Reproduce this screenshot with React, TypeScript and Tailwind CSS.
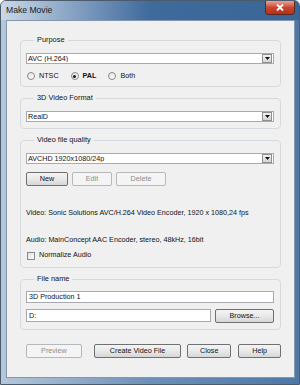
import type { ReactNode } from 'react'

const font = { fontFamily: '"Liberation Sans", Arial, sans-serif' }

function Combo({ value }: { value: string }) {
  return (
    <div className="flex h-[11px] items-center border border-[#a7abb0] bg-white pl-[1px]">
      <span className="flex-1 truncate leading-none text-[#111]">{value}</span>
      <span className="mr-[1px] flex h-[9px] w-[10px] items-center justify-center border border-[#8e8f8f] bg-gradient-to-b from-[#f2f2f2] to-[#d4d4d4]">
        <svg width="5" height="3" viewBox="0 0 5 3">
          <path d="M0 0h5L2.5 3z" fill="#111" />
        </svg>
      </span>
    </div>
  )
}

function Btn({
  children,
  disabled,
  className = ''
}: {
  children: ReactNode
  disabled?: boolean
  className?: string
}) {
  return (
    <button
      type="button"
      className={`flex h-[14px] items-center justify-center rounded-[2px] border leading-none ${
        disabled
          ? 'border-[#b5b9bc] bg-[#f4f4f4] text-[#8d8d8d]'
          : 'border-[#707070] bg-gradient-to-b from-[#f4f4f4] via-[#e9e9e9] to-[#d6d6d6] text-[#111]'
      } ${className}`}
    >
      {children}
    </button>
  )
}

function Radio({ label, checked }: { label: string; checked?: boolean }) {
  return (
    <span className="flex items-center gap-[4px]">
      <span className="flex h-[8px] w-[8px] items-center justify-center rounded-full border border-[#8a8a8a] bg-gradient-to-br from-[#e2e2e2] to-white">
        {checked && <span className="h-[3px] w-[3px] rounded-full bg-[#1a1a1a]" />}
      </span>
      <span className={checked ? 'font-bold text-[#111]' : 'text-[#111]'}>{label}</span>
    </span>
  )
}

function Group({ title, children, className = '' }: { title: string; children: ReactNode; className?: string }) {
  return (
    <fieldset className={`rounded-[4px] border border-[#d5d9dd] pl-[5px] pr-[6px] ${className}`}>
      <legend className="ml-[8px] px-[3px] text-[7.4px] leading-[10px] text-[#111]">{title}</legend>
      {children}
    </fieldset>
  )
}

function Field({ value, className = '' }: { value: string; className?: string }) {
  return (
    <div className={`flex h-[12px] items-center border border-[#a7abb0] bg-white pl-[2px] leading-none ${className}`}>
      {value}
    </div>
  )
}

export default function App() {
  return (
    <div
      className="relative flex h-[385px] w-[300px] flex-col overflow-hidden rounded-t-[6px] border border-[#4c5b6c] bg-gradient-to-r from-[#b5c7da] via-[#6d90b8] to-[#4d77a6] text-[7.2px]"
      style={font}
    >
      {/* title bar */}
      <div className="flex h-[19px] shrink-0 items-center bg-gradient-to-r from-[#cbd8e6] via-[#3f6a9c] to-[#3a6597] pl-[5px]">
        <span className="text-[8.6px] leading-none text-[#1b1b1b]">Make Movie</span>
      </div>
      <div className="absolute right-[4px] top-[-1px] flex h-[15px] w-[30px] items-center justify-center rounded-b-[3px] border border-[#5a2a22] bg-gradient-to-b from-[#e8a394] via-[#c8462f] to-[#b2301c]">
        <svg width="8" height="7" viewBox="0 0 8 7">
          <path d="M1 0.5l6 6M7 0.5l-6 6" stroke="#fff" strokeWidth="1.8" />
        </svg>
      </div>

      {/* client area */}
      <div className="mb-[6px] ml-[5px] mr-[4px] flex flex-1 flex-col border border-[#8497ad] bg-[#f0f0f0] px-[13px] pt-[14px] text-[#111]">
        <Group title="Purpose" className="pb-[5px]">
          <div className="mt-[8px]">
            <Combo value="AVC (H.264)" />
          </div>
          <div className="mt-[7px] flex h-[10px] items-center gap-[12px] pl-[1px]">
            <Radio label="NTSC" />
            <Radio label="PAL" checked />
            <Radio label="Both" />
          </div>
        </Group>

        <Group title="3D Video Format" className="mt-[6px] pb-[6px]">
          <div className="mt-[8px]">
            <Combo value="RealD" />
          </div>
        </Group>

        <Group title="Video file quality" className="mt-[6px] pb-[7px]">
          <div className="mt-[8px]">
            <Combo value="AVCHD 1920x1080/24p" />
          </div>
          <div className="mt-[8px] flex gap-[4px]">
            <Btn className="w-[42px]">New</Btn>
            <Btn disabled className="w-[40px]">
              Edit
            </Btn>
            <Btn disabled className="w-[50px]">
              Delete
            </Btn>
          </div>
          <div className="mt-[22px] h-[10px] leading-[10px]">
            Video: Sonic Solutions AVC/H.264 Video Encoder, 1920 x 1080,24 fps
          </div>
          <div className="mt-[17px] h-[10px] leading-[10px]">
            Audio: MainConcept AAC Encoder, stereo, 48kHz, 16bit
          </div>
          <div className="mt-[6px] flex h-[9px] items-center gap-[4px] pl-[1px]">
            <span className="h-[8px] w-[8px] border border-[#8a8a8a] bg-gradient-to-br from-[#dedede] to-white" />
            <span>Normalize Audio</span>
          </div>
        </Group>

        <Group title="File name" className="mt-[6px] pb-[6px]">
          <Field value="3D Production 1" className="mt-[7px]" />
          <div className="mt-[6px] flex gap-[4px]">
            <Field value="D:" className="h-[13px] flex-1" />
            <Btn className="w-[59px]">Browse...</Btn>
          </div>
        </Group>

        <div className="mt-[14px] flex items-center">
          <Btn disabled className="ml-[6px] w-[56px]">
            Preview
          </Btn>
          <Btn className="ml-[12px] w-[88px]">Create Video File</Btn>
          <Btn className="ml-[6px] w-[44px]">Close</Btn>
          <Btn className="ml-[7px] w-[43px]">Help</Btn>
        </div>
      </div>
    </div>
  )
}
